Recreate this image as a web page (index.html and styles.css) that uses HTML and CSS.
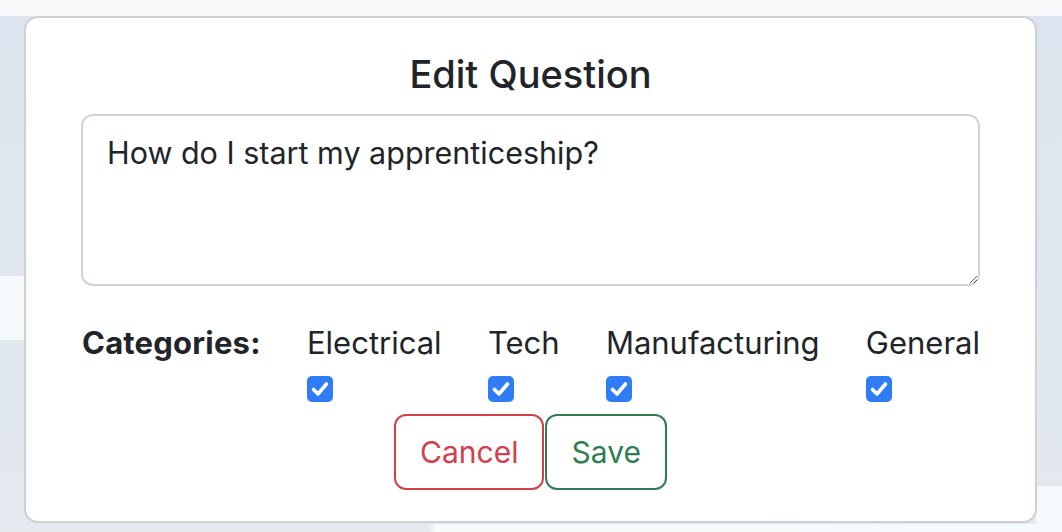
FILE: index.html
```html
<!DOCTYPE html>
<html lang="en">
<head>
<meta charset="utf-8">
<title>Edit Question</title>
<link rel="stylesheet" href="styles.css">
</head>
<body>
<div class="topbar"></div>
<div class="stage">
  <div class="modal">
    <h2 class="modal-title">Edit Question</h2>
    <textarea class="question" rows="3">How do I start my apprenticeship?</textarea>
    <div class="categories">
      <span class="cat-label">Categories:</span>
      <label class="cat">
        <span class="cat-name">Electrical</span>
        <span class="check"><svg viewBox="0 0 26 26" width="26" height="26"><path d="M6.5 13.5 L11 18 L19.5 8" fill="none" stroke="#fff" stroke-width="3.6" stroke-linecap="round" stroke-linejoin="round"/></svg></span>
      </label>
      <label class="cat">
        <span class="cat-name">Tech</span>
        <span class="check"><svg viewBox="0 0 26 26" width="26" height="26"><path d="M6.5 13.5 L11 18 L19.5 8" fill="none" stroke="#fff" stroke-width="3.6" stroke-linecap="round" stroke-linejoin="round"/></svg></span>
      </label>
      <label class="cat">
        <span class="cat-name">Manufacturing</span>
        <span class="check"><svg viewBox="0 0 26 26" width="26" height="26"><path d="M6.5 13.5 L11 18 L19.5 8" fill="none" stroke="#fff" stroke-width="3.6" stroke-linecap="round" stroke-linejoin="round"/></svg></span>
      </label>
      <label class="cat">
        <span class="cat-name">General</span>
        <span class="check"><svg viewBox="0 0 26 26" width="26" height="26"><path d="M6.5 13.5 L11 18 L19.5 8" fill="none" stroke="#fff" stroke-width="3.6" stroke-linecap="round" stroke-linejoin="round"/></svg></span>
      </label>
    </div>
    <div class="actions">
      <button class="btn btn-cancel" type="button">Cancel</button>
      <button class="btn btn-save" type="button">Save</button>
    </div>
  </div>
</div>
<div class="footer-strip"></div>
</body>
</html>
```

FILE: styles.css
```css
* { box-sizing: border-box; }

html, body {
  margin: 0;
  height: 100%;
}

body {
  font-family: Inter, "Noto Sans", "Liberation Sans", sans-serif;
  color: #212529;
  background:
    linear-gradient(to bottom, transparent 0, transparent 276px, #f7fafc 276px, #f4f9fc 340px, transparent 340px) left top / 24px 100% no-repeat,
    linear-gradient(to bottom, transparent 0, transparent 486px, #f6f9fb 486px) right top / 26px 100% no-repeat,
    linear-gradient(to bottom, #dce4ef 0%, #e4e9ef 100%);
  overflow: hidden;
}

.topbar {
  height: 16px;
  background: #f6f8fa;
}

.stage {
  display: flex;
  padding-left: 24px;
}

.modal {
  width: 1013px;
  height: 507px;
  background: #fff;
  border: 2px solid #d0d0d0;
  border-radius: 14px;
  padding: 32px 55px 30px;
  display: flex;
  flex-direction: column;
}

.modal-title {
  margin: 0 0 16px;
  font-size: 38px;
  font-weight: 500;
  line-height: 48px;
  text-align: center;
  color: #212529;
}

.question {
  display: block;
  width: 100%;
  height: 172px;
  flex: none;
  font-family: inherit;
  font-size: 30.5px;
  line-height: 48px;
  color: #212529;
  padding: 13px 24px 11px;
  border: 2px solid #ced4da;
  border-radius: 12px;
  resize: vertical;
  outline: none;
}

.categories {
  display: flex;
  justify-content: space-between;
  align-items: flex-start;
  margin-top: 33px;
  padding-left: 1px;
}

.cat-label {
  font-size: 31px;
  font-weight: 700;
  line-height: 48px;
  letter-spacing: 0.2px;
}

.cat {
  display: flex;
  flex-direction: column;
  align-items: flex-start;
}

.cat-name {
  font-size: 31px;
  line-height: 48px;
}

.check {
  width: 26px;
  height: 26px;
  flex: none;
  margin-top: 9px;
  background: #2f7cf6;
  border-radius: 5px;
  display: flex;
}

.actions {
  display: flex;
  justify-content: center;
  gap: 1px;
  margin-top: 12px;
}

.btn {
  font-family: inherit;
  font-size: 30px;
  line-height: 48px;
  padding: 12px 24px;
  background: #fff;
  border: 2px solid;
  border-radius: 12px;
  cursor: pointer;
}

.btn-cancel {
  color: #d2404b;
  border-color: #d2404b;
}

.btn-save {
  color: #2e7e52;
  border-color: #2e7e52;
}

.footer-strip {
  position: fixed;
  left: 0;
  right: 0;
  bottom: 0;
  height: 8px;
  background: linear-gradient(to right, #e6eaee 0, #e6eaee 428px, #f8fbfc 436px, #f4fafc 100%);
  z-index: -1;
}
```
